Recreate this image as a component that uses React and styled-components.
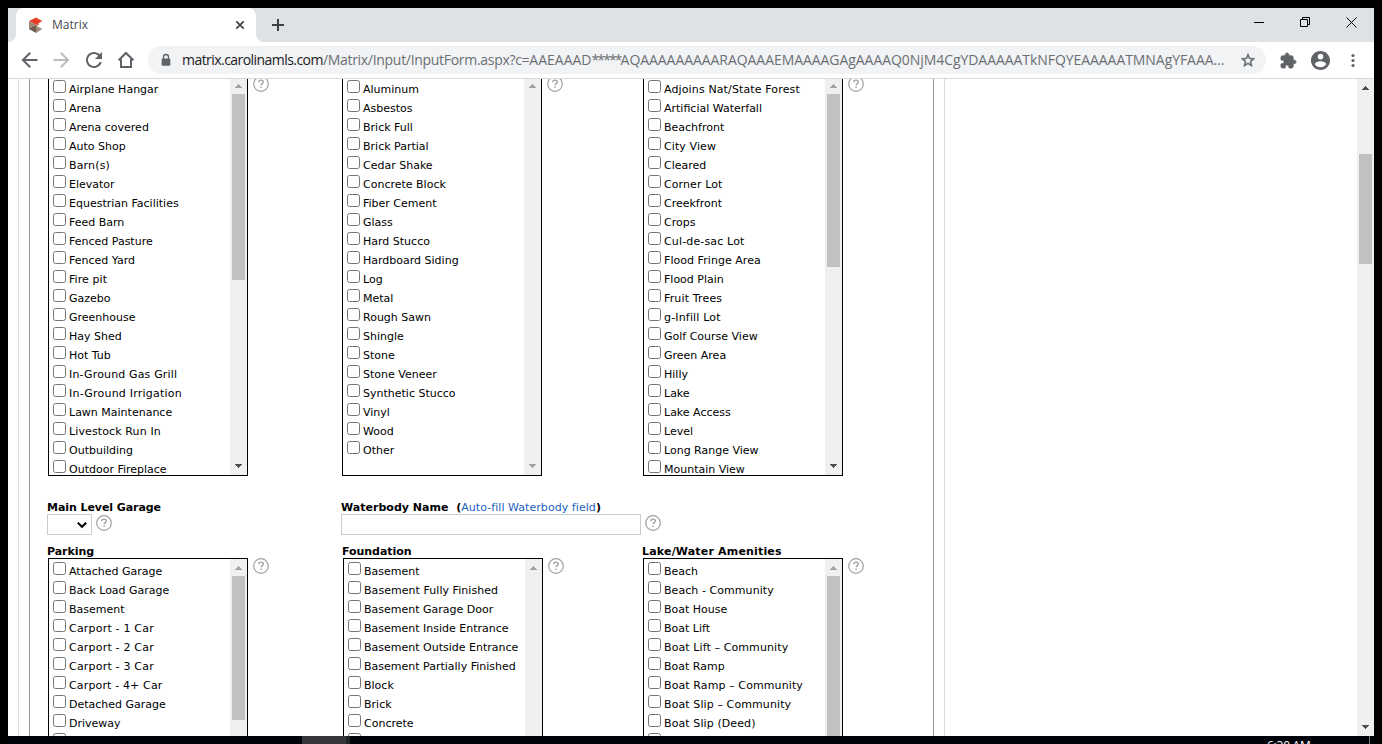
import React from "react";
import styled, { createGlobalStyle } from "styled-components";

const Global = createGlobalStyle`
  * { box-sizing: border-box; }
  body { margin: 0; background: #000; overflow: hidden; }
`;

const Desktop = styled.div`
  width: 1382px; height: 744px; padding: 8px 8px 0; background: #000;
  overflow: hidden; display: flex; flex-direction: column;
  font-family: "DejaVu Sans", Verdana, sans-serif; font-size: 11px; color: #000;
`;
const Browser = styled.div`
  height: 728px; flex: none; background: #fff; display: flex; flex-direction: column;
`;
const TabStrip = styled.div`
  height: 34px; flex: none; background: #dee1e6; display: flex; justify-content: space-between;
`;
const TabGroup = styled.div`display: flex; align-items: center;`;
const TabFoot = styled.div`
  width: 8px; height: 34px;
  background: radial-gradient(circle at ${p => (p.$right ? "100%" : "0")} 0, #dee1e6 7.6px, #fff 8.2px) 0 26px / 8px 8px no-repeat;
`;
const Tab = styled.div`
  width: 240px; height: 34px; background: #fff; border-radius: 8px 8px 0 0;
  display: flex; align-items: center; padding: 0 12px 0 12px;
`;
const TabTitle = styled.span`
  flex: 1; margin-left: 8px; font: 12px/16px "Open Sans", sans-serif; color: #45494d;
`;
const Icon = styled.svg`display: block; flex: none; overflow: visible;`;
const NewTab = styled.div`margin-left: 8px; display: flex;`;
const WindowButtons = styled.div`
  display: flex; align-items: center; gap: 36px; padding-right: 17px; height: 28px;
`;
const Toolbar = styled.div`
  height: 37px; flex: none; border-bottom: 1px solid #d5d7da; display: flex; align-items: center;
  padding-left: 14px;
`;
const NavIcons = styled.div`display: flex; gap: 16px; width: 126px;`;
const Omnibox = styled.div`
  width: 1118px; height: 28px; border-radius: 14px; background: #f1f3f4;
  display: flex; align-items: center; padding: 0 11px 0 12px;
`;
const Url = styled.div`
  flex: 1; margin-left: 10px; white-space: nowrap;
  font: 14px/24px "Open Sans", sans-serif; color: #6b6f74;
`;
const UrlPart = styled.span`
  color: ${p => (p.$host ? "#202124" : "inherit")}; letter-spacing: ${p => p.$ls}px;
`;
const ToolIcons = styled.div`display: flex; align-items: center; margin-left: 14.5px; gap: 15px;`;

const Viewport = styled.div`flex: 1; min-height: 0; display: flex; overflow: hidden;`;
const Page = styled.div`flex: 1; padding-left: 10px; overflow: hidden;`;
const OuterFrame = styled.div`
  width: 927px; height: 100%; border: solid #dcdcdc; border-width: 0 1px; padding: 0 10px;
`;
const InnerFrame = styled.div`
  height: 100%; border: solid #999; border-width: 0 1px; padding-left: 17px; overflow: hidden;
`;
const Form = styled.div`margin-top: -3px; display: flex; flex-direction: column;`;
const FormRow = styled.div`
  display: grid; grid-template-columns: ${p => p.$cols}; align-items: start;
  margin-top: ${p => p.$top || 0}px;
`;
const Field = styled.div`display: flex; flex-direction: column;`;
const Label = styled.div`
  height: 14px; line-height: 16px; font-weight: bold; white-space: pre;
  font-size: 11px; letter-spacing: ${p => p.$ls ?? -0.05}px;
`;
const Link = styled.span`color: #1b5fbd; font-weight: normal; letter-spacing: 0.06px;`;
const Control = styled.div`display: flex; align-items: flex-start; gap: ${p => p.$gap ?? 5}px; padding-left: ${p => p.$indent || 0}px;`;
const ListBox = styled.div`
  width: 200px; height: 400px; border: 1px solid #000; display: flex; overflow: hidden;
`;
const Options = styled.div`flex: 1; padding: 3px 0 0 4px; overflow: hidden;`;
const Option = styled.label`
  height: 19px; display: flex; align-items: flex-start; white-space: nowrap;
`;
const Check = styled.span`
  width: 13px; height: 13px; border: 1px solid #767676; border-radius: 2.5px; background: #fff; flex: none;
`;
const OptionText = styled.span`margin: 3px 0 0 3px; line-height: 14px; letter-spacing: ${p => p.$ls || 0}px;`;
const Track = styled.div`
  width: 17px; flex: none; background: #f0f0f0; display: flex; flex-direction: column; align-items: center;
  justify-content: space-between; padding: 7px 0;
`;
const Thumb = styled.div`
  width: 13px; height: ${p => p.$h}px; margin-top: ${p => p.$top}px; background: #c1c1c1; flex: none;
`;
const TrackTop = styled.div`display: flex; flex-direction: column; align-items: center;`;
const Help = styled.div`margin-top: ${p => p.$top || 0}px; display: flex;`;
const Select = styled.div`
  width: 45px; height: 21px; flex: none; border: 1px solid #ccc; display: flex; align-items: center;
  justify-content: flex-end; padding-right: 4px;
`;
const Input = styled.div`width: 300px; height: 21px; flex: none; border: 1px solid #ccc;`;
const Taskbar = styled.div`
  height: 8px; flex: none; background: #00040a; display: flex; padding-left: 294px; overflow: hidden;
`;
const Task = styled.div`width: ${p => p.$w}px; background: ${p => p.$c};`;
const Clock = styled.div`
  margin: 4px 0 0 917px; width: 102px; font: 12px/12px "Open Sans", sans-serif; color: #fff;
  letter-spacing: -0.25px; white-space: nowrap;
`;
const Divider = styled.div`width: 1px; background: #777;`;

const Arrow = ({ down, color }) => (
  <Icon width="7" height="4" viewBox="0 0 7 4" shapeRendering="crispEdges" fill={color}>
    <path d={down ? "M0 0h7v1H6v1H5v1H4v1H3V3H2V2H1V1H0z" : "M0 4h7V3H6V2H5V1H4V0H3v1H2v1H1v1H0z"} />
  </Icon>
);

const ScrollBar = ({ thumb, top = 6, upActive, downActive }) => (
  <Track>
    <TrackTop>
      <Arrow color={upActive ? "#505050" : "#a3a3a3"} />
      {thumb ? <Thumb $h={thumb} $top={top} /> : null}
    </TrackTop>
    <Arrow down color={downActive ? "#505050" : "#a3a3a3"} />
  </Track>
);

const HelpIcon = ({ top }) => (
  <Help $top={top}>
    <Icon width="16" height="16" viewBox="0 0 16 16" fill="none" stroke="#a0a0a0">
      <circle cx="8" cy="8" r="7.3" strokeWidth="1.2" />
      <path d="M5.8 6.2C5.8 4.8 6.8 4.1 8 4.1s2.3.7 2.3 1.9c0 1.6-2.1 1.6-2.1 3.2M8.1 10.6v1.5" strokeWidth="1.4" />
    </Icon>
  </Help>
);

const tracking = {
  "In-Ground Irrigation": 0.22, "In-Ground Gas Grill": 0.15, "Fire pit": 0.08, "Livestock Run In": 0.12,
  "Carport - 1 Car": 0.2, "Carport - 2 Car": 0.2, "Carport - 3 Car": 0.2, "Carport - 4+ Car": 0.15,
  "Adjoins Nat/State Forest": 0.13, "Fruit Trees": 0.15, "g-Infill Lot": 0.17, "Cul-de-sac Lot": 0.15,
  "City View": 0.1, "Corner Lot": 0.1, "Beach - Community": 0.06, "Boat Lift – Community": 0.1,
  "Boat Ramp – Community": 0.1, "Boat Slip – Community": 0.1, "Boat Slip (Deed)": 0.1,
  "Flood Fringe Area": 0.05, "Basement Fully Finished": 0.05, "Barn(s)": 0.15,
};

const CheckList = ({ items, thumb, downActive }) => (
  <Control $indent={1}>
    <ListBox>
      <Options>
        {items.map((t, i) => (
          <Option key={i}><Check /><OptionText $ls={tracking[t]}>{t}</OptionText></Option>
        ))}
      </Options>
      <ScrollBar thumb={thumb} downActive={downActive} />
    </ListBox>
    <HelpIcon />
  </Control>
);

const features = ["Airplane Hangar", "Arena", "Arena covered", "Auto Shop", "Barn(s)", "Elevator", "Equestrian Facilities", "Feed Barn", "Fenced Pasture", "Fenced Yard", "Fire pit", "Gazebo", "Greenhouse", "Hay Shed", "Hot Tub", "In-Ground Gas Grill", "In-Ground Irrigation", "Lawn Maintenance", "Livestock Run In", "Outbuilding", "Outdoor Fireplace"];
const siding = ["Aluminum", "Asbestos", "Brick Full", "Brick Partial", "Cedar Shake", "Concrete Block", "Fiber Cement", "Glass", "Hard Stucco", "Hardboard Siding", "Log", "Metal", "Rough Sawn", "Shingle", "Stone", "Stone Veneer", "Synthetic Stucco", "Vinyl", "Wood", "Other"];
const lot = ["Adjoins Nat/State Forest", "Artificial Waterfall", "Beachfront", "City View", "Cleared", "Corner Lot", "Creekfront", "Crops", "Cul-de-sac Lot", "Flood Fringe Area", "Flood Plain", "Fruit Trees", "g-Infill Lot", "Golf Course View", "Green Area", "Hilly", "Lake", "Lake Access", "Level", "Long Range View", "Mountain View"];
const parking = ["Attached Garage", "Back Load Garage", "Basement", "Carport - 1 Car", "Carport - 2 Car", "Carport - 3 Car", "Carport - 4+ Car", "Detached Garage", "Driveway", ""];
const foundation = ["Basement", "Basement Fully Finished", "Basement Garage Door", "Basement Inside Entrance", "Basement Outside Entrance", "Basement Partially Finished", "Block", "Brick", "Concrete", ""];
const water = ["Beach", "Beach - Community", "Boat House", "Boat Lift", "Boat Lift – Community", "Boat Ramp", "Boat Ramp – Community", "Boat Slip – Community", "Boat Slip (Deed)", ""];

const NavIcon = ({ d, color = "#5f6368", size = 16, box = "4 4 16 16", bold = 0 }) => (
  <Icon width={size} height={size} viewBox={box} fill={color} stroke={color} strokeWidth={bold}><path d={d} /></Icon>
);

export default function App() {
  return (
    <Desktop>
      <Global />
      <Browser>
        <TabStrip>
          <TabGroup>
            <TabFoot />
            <Tab>
              <Icon width="16" height="16" viewBox="0 0 16 16">
                <path d="M1 4 8 .5l6.300 3.500L8 8z" fill="#e8402a" />
                <path d="M1 4l7 4v4.500L1 12z" fill="#9c8879" />
                <path d="M1 12l7-3.700V16z" fill="#6e5a4b" />
                <path d="M8 8.500l6.300 3.600L8 16z" fill="#a08d7e" />
                <path d="M8 8l3-1.700v1L8.500 9z" fill="#c5331f" />
              </Icon>
              <TabTitle>Matrix</TabTitle>
              <Icon width="8" height="8" viewBox="0 0 8 8" stroke="#3c4043" strokeWidth="1.7"><path d="M.3.3l7.400 7.400M7.700.3L.3 7.700" /></Icon>
            </Tab>
            <TabFoot $right />
            <NewTab><Icon width="12" height="12" viewBox="0 0 12 12" stroke="#3c4043" strokeWidth="2"><path d="M6 0v12M0 6h12" /></Icon></NewTab>
          </TabGroup>
          <WindowButtons>
            <Icon width="10" height="10" viewBox="0 0 10 10" stroke="#000"><path d="M0 5.5h10" /></Icon>
            <Icon width="10" height="10" viewBox="0 0 10 10" stroke="#000" fill="none"><path d="M.5 2.5h7v7h-7zM2.5 2.5v-2h7v7h-2" /></Icon>
            <Icon width="11" height="11" viewBox="0 0 11 11" stroke="#000"><path d="M.5.5l10 10M10.5.5l-10 10" /></Icon>
          </WindowButtons>
        </TabStrip>
        <Toolbar>
          <NavIcons>
            <NavIcon d="M20 11H7.83l5.59-5.59L12 4l-8 8 8 8 1.41-1.41L7.83 13H20v-2z" box="4.5 4 16 16" />
            <NavIcon color="#babcbe" d="M12 4l-1.41 1.41L16.17 11H4v2h12.17l-5.58 5.59L12 20l8-8z" box="4.5 4 16 16" />
            <NavIcon d="M17.65 6.35C16.2 4.9 14.21 4 12 4c-4.42 0-7.99 3.58-7.99 8s3.57 8 7.99 8c3.73 0 6.84-2.55 7.73-6h-2.08c-.82 2.33-3.04 4-5.65 4-3.31 0-6-2.69-6-6s2.69-6 6-6c1.66 0 3.14.69 4.22 1.78L13 11h7V4l-2.35 2.35z" />
            <Icon width="16" height="16" viewBox="0 0 16 16" fill="none" stroke="#5f6368" strokeWidth="2"><path d="M.6 8.3L8 1l7.4 7.3M3 7v8h10V7" /></Icon>
          </NavIcons>
          <Omnibox>
            <Icon width="12" height="12" viewBox="0 0 12 12"><path d="M3.500 5V3a2.500 2.500 0 0 1 5 0v2" fill="none" stroke="#5f6368" strokeWidth="1.3" /><rect x="1.700" y="4.400" width="8.600" height="7.400" rx="1" fill="#5f6368" /></Icon>
            <Url>
              <UrlPart $host $ls={-0.55}>matrix.carolinamls.com</UrlPart>
              <UrlPart $ls={-0.3}>/Matrix/Input/InputForm.aspx?c=</UrlPart>
              <UrlPart $ls={0}>AAEAAAD</UrlPart>
              <UrlPart $ls={-1.9}>*****</UrlPart>
              <UrlPart $ls={-0.06}>AQAAAAAAAAARAQAAAEMAAAAGAgAAAAQ0NjM4CgYDAAAAATkNFQYEAAAAATMNAgYFAAA...</UrlPart>
            </Url>
            <NavIcon size={14} bold={0.5} d="M22 9.24l-7.19-.62L12 2 9.19 8.63 2 9.24l5.46 4.73L5.82 21 12 17.27 18.18 21l-1.63-7.03L22 9.24zM12 15.4l-3.76 2.27 1-4.28-3.32-2.88 4.38-.38L12 6.1l1.71 4.04 4.38.38-3.32 2.88 1 4.28L12 15.4z" box="2 1.5 20 20" />
          </Omnibox>
          <ToolIcons>
            <NavIcon size={15} bold={1.2} box="2 1 21 21" d="M20.5 11H19V7c0-1.1-.9-2-2-2h-4V3.5C13 2.12 11.88 1 10.5 1S8 2.12 8 3.5V5H4c-1.1 0-1.99.9-1.99 2v3.8H3.5c1.49 0 2.7 1.21 2.7 2.7s-1.21 2.7-2.7 2.7H2V20c0 1.1.9 2 2 2h3.8v-1.5c0-1.49 1.21-2.7 2.7-2.7 1.49 0 2.7 1.21 2.7 2.7V22H17c1.1 0 2-.9 2-2v-4h1.5c1.38 0 2.5-1.12 2.5-2.5S21.88 11 20.5 11z" />
            <NavIcon size={19} box="2 2 20 20" d="M12 2C6.48 2 2 6.48 2 12s4.480 10 10 10 10-4.480 10-10S17.520 2 12 2zm0 3c1.660 0 3 1.340 3 3s-1.340 3-3 3-3-1.340-3-3 1.340-3 3-3zm0 14.200c-2.500 0-4.710-1.280-6-3.220.030-1.990 4-3.080 6-3.080 1.990 0 5.970 1.090 6 3.080-1.290 1.940-3.500 3.220-6 3.220z" />
            <Icon width="15" height="14" viewBox="0 0 15 14" fill="#5f6368"><circle cx="8" cy="2.5" r="1.6" /><circle cx="8" cy="7.5" r="1.6" /><circle cx="8" cy="12.5" r="1.6" /></Icon>
          </ToolIcons>
        </Toolbar>
        <Viewport>
          <Page>
            <OuterFrame>
              <InnerFrame>
                <Form>
                  <FormRow $cols="294px 301px 1fr">
                    <CheckList items={features} thumb={186} downActive />
                    <CheckList items={siding} />
                    <CheckList items={lot} thumb={173} downActive />
                  </FormRow>
                  <FormRow $cols="294px 301px 1fr" $top={24}>
                    <Field>
                      <Label $ls={-0.07}>Main Level Garage</Label>
                      <Control $gap={4}>
                        <Select><Icon width="10" height="6" viewBox="0 0 10 6" fill="none" stroke="#000" strokeWidth="2"><path d="M.8.8L5 4.8 9.200.8" /></Icon></Select>
                        <HelpIcon top={1} />
                      </Control>
                    </Field>
                    <Field>
                      <Label $ls={0.02}>Waterbody Name  (<Link>Auto-fill Waterbody field</Link>)</Label>
                      <Control $gap={4}><Input /><HelpIcon top={1} /></Control>
                    </Field>
                  </FormRow>
                  <FormRow $cols="295px 300px 1fr" $top={9}>
                    <Field><Label>Parking</Label><CheckList items={parking} thumb={144} /></Field>
                    <Field><Label>Foundation</Label><CheckList items={foundation} /></Field>
                    <Field><Label $ls={0.18}>Lake/Water Amenities</Label><CheckList items={water} thumb={190} /></Field>
                  </FormRow>
                </Form>
              </InnerFrame>
            </OuterFrame>
          </Page>
          <ScrollBar thumb={110} top={64} upActive downActive />
        </Viewport>
      </Browser>
      <Taskbar>
        <Task $w={44} $c="#35363a" /><Task $w={4} $c="#222327" />
        <Clock>6:30 AM</Clock><Divider />
      </Taskbar>
    </Desktop>
  );
}
